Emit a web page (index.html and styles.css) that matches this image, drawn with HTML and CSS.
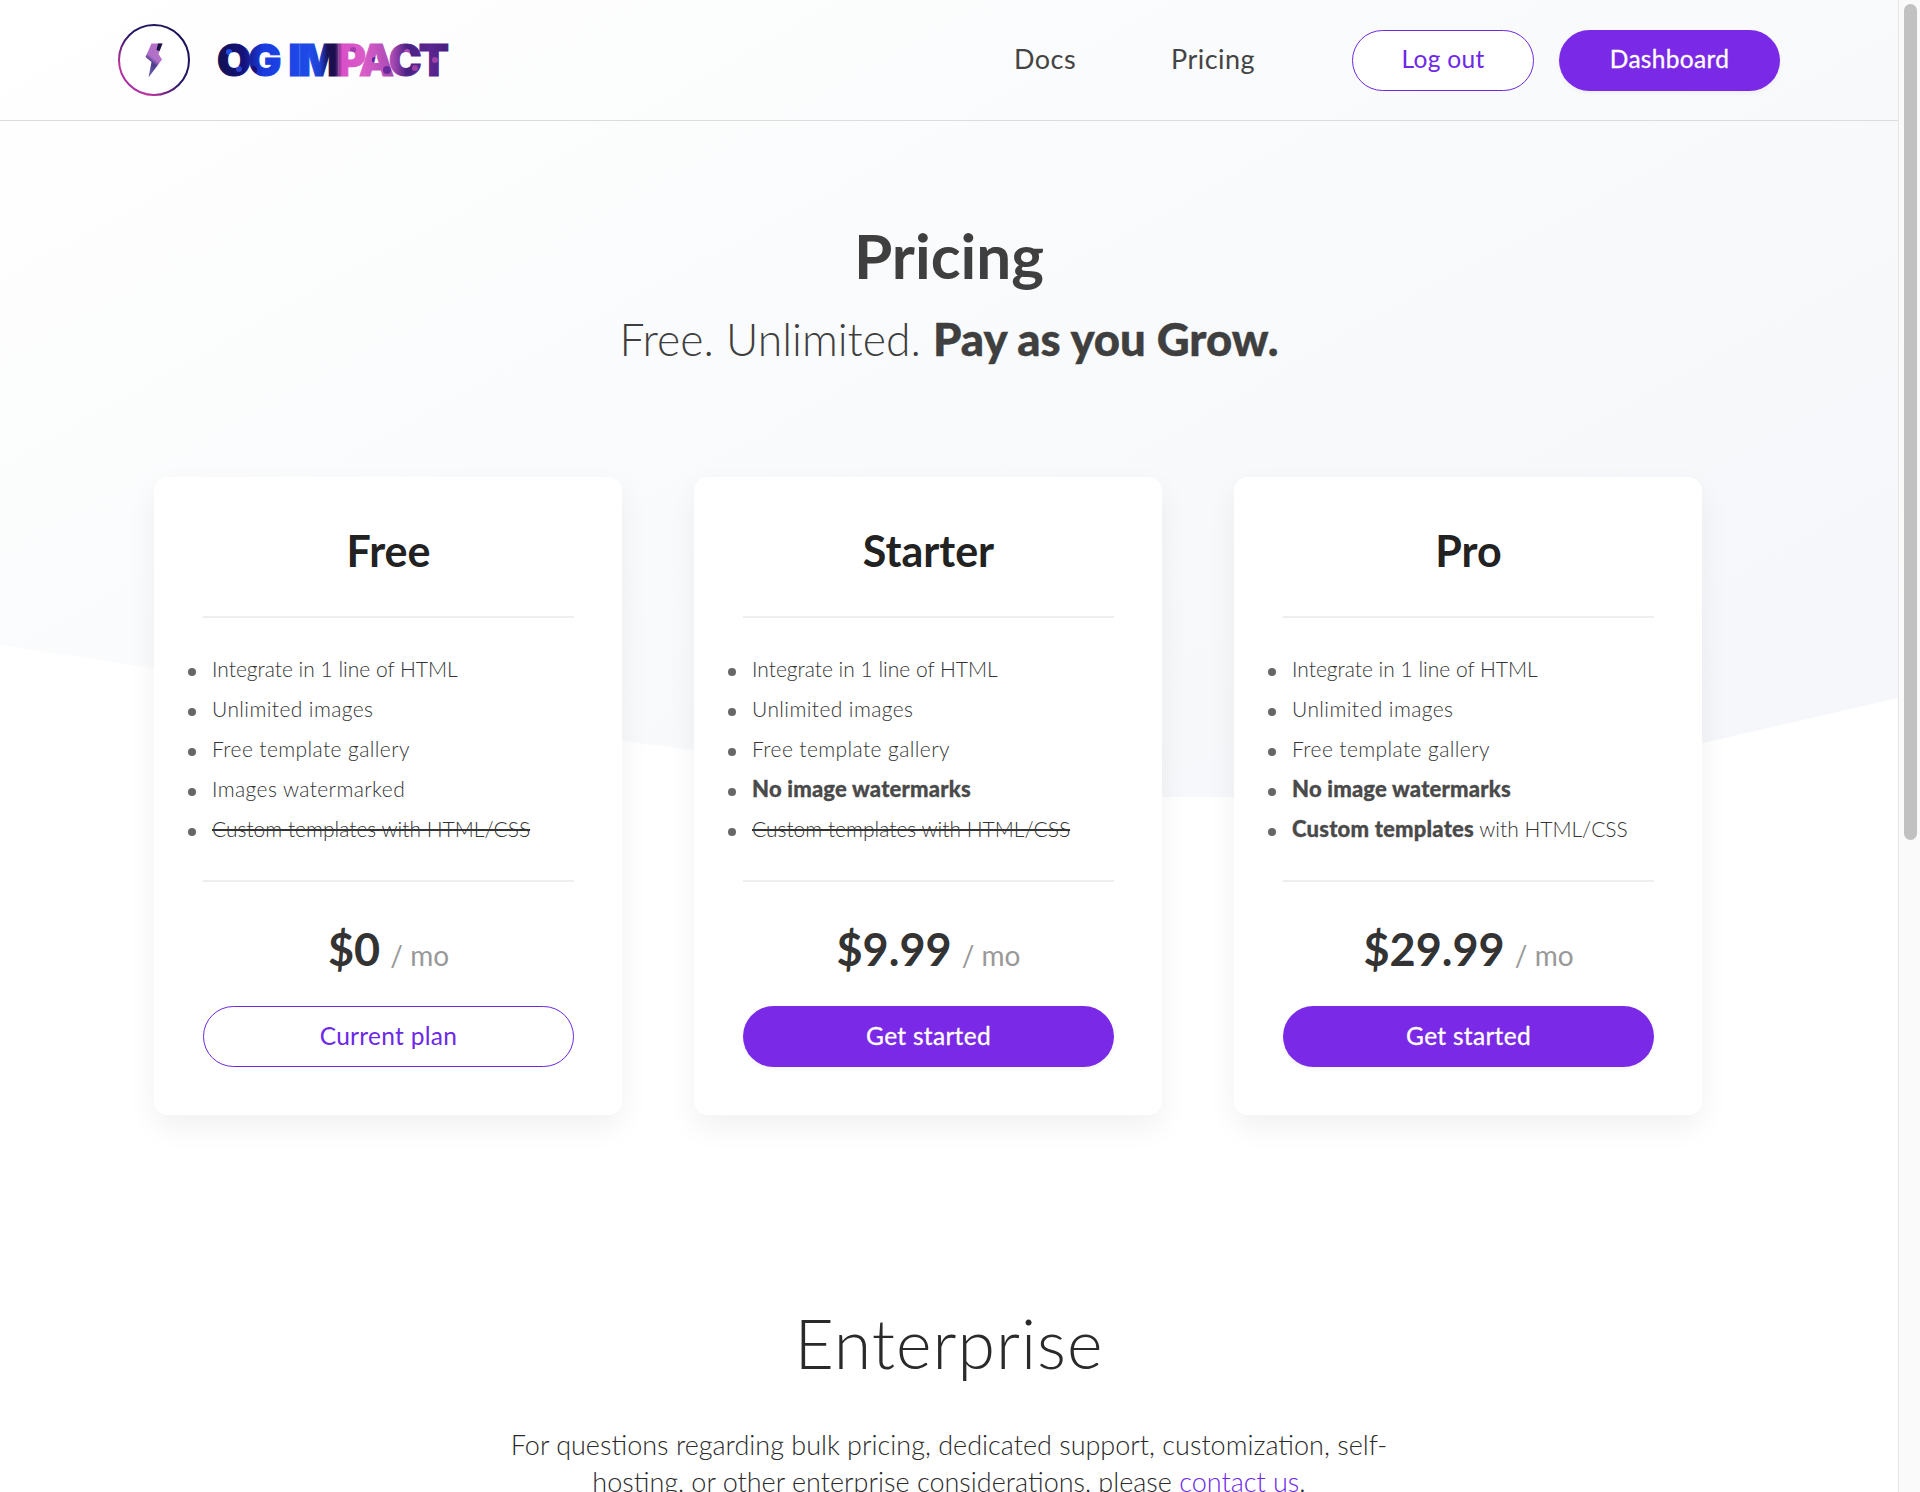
FILE: index.html
```html
<!DOCTYPE html>
<html lang="en">
<head>
	<meta charset="UTF-8">
	<title>Pricing</title>
<link rel="stylesheet" href="styles.css">
</head>
<body>
<div class="page">
	<div class="main">
		<svg class="wave" width="1898" height="800" viewBox="0 0 1898 800">
			<defs>
				<linearGradient id="waveFill" x1="0" y1="0" x2="1" y2="0.75">
					<stop offset="0" stop-color="#ffffff"/>
					<stop offset="0.45" stop-color="#fafbfc"/>
					<stop offset="1" stop-color="#f5f7fa"/>
				</linearGradient>
			</defs>
			<path d="M0 0H1898V698L1703 743Q1600 772 1480 797H985L693 750L622 741Q300 690 0 645Z" fill="url(#waveFill)"/>
		</svg>
		<header class="nav">
			<div class="brand">
				<svg class="brand-mark" width="72" height="72" viewBox="0 0 72 72">
					<defs>
						<linearGradient id="ring" x1="1" y1="0" x2="0" y2="1">
							<stop offset="0" stop-color="#14104f"/>
							<stop offset="0.5" stop-color="#2a1668"/>
							<stop offset="0.8" stop-color="#c2339f"/>
							<stop offset="1" stop-color="#5a22b0"/>
						</linearGradient>
						<linearGradient id="bolt" x1="0.7" y1="0" x2="0.3" y2="1">
							<stop offset="0" stop-color="#b96fc9"/>
							<stop offset="0.45" stop-color="#b070c8"/>
							<stop offset="0.6" stop-color="#4c3a8e"/>
							<stop offset="1" stop-color="#6a68b4"/>
						</linearGradient>
					</defs>
					<circle cx="36" cy="36" r="35" fill="#fff" stroke="url(#ring)" stroke-width="2"/>
					<path d="M33.5 19.5H44.5L40.5 30L44 35.5L30.5 53.5L33.5 38L27.5 33Z" fill="url(#bolt)"/>
					<path d="M40 19.5H44.5L41.5 27L38.5 26Z" fill="#1c1440"/>
				</svg>
				<svg class="brand-name" width="250" height="64" viewBox="0 0 250 64">
					<defs>
						<linearGradient id="nameFill" gradientUnits="userSpaceOnUse" x1="0" y1="0" x2="240" y2="0">
							<stop offset="0" stop-color="#10104f"/>
							<stop offset="0.12" stop-color="#14127a"/>
							<stop offset="0.2" stop-color="#1a3be0"/>
							<stop offset="0.4" stop-color="#1f4be8"/>
							<stop offset="0.44" stop-color="#1d3fcc"/>
							<stop offset="0.47" stop-color="#1c0f50"/>
							<stop offset="0.5" stop-color="#1c0f50"/>
							<stop offset="0.53" stop-color="#d94fc8"/>
							<stop offset="0.62" stop-color="#d95cc8"/>
							<stop offset="0.74" stop-color="#a84ab4"/>
							<stop offset="0.8" stop-color="#4a2185"/>
							<stop offset="0.9" stop-color="#5a2590"/>
							<stop offset="1" stop-color="#3f1c78"/>
						</linearGradient>
						<pattern id="nameTexture" patternUnits="userSpaceOnUse" width="250" height="64">
							<rect width="250" height="64" fill="url(#nameFill)"/>
							<circle cx="14" cy="24" r="3" fill="#1f4be8"/>
							<circle cx="24" cy="41" r="3" fill="#2a3fc8"/>
							<circle cx="38" cy="42" r="4" fill="#14127a"/>
							<circle cx="160" cy="32" r="3" fill="#5a1f90"/>
							<circle cx="172" cy="42" r="4" fill="#6a2a9c"/>
							<circle cx="192" cy="24" r="3" fill="#b04ab5"/>
							<circle cx="200" cy="40" r="3" fill="#a040a8"/>
							<circle cx="220" cy="32" r="3" fill="#a040a8"/>
							<circle cx="138" cy="22" r="3" fill="#a03cb0"/>
						</pattern>
					</defs>
					<text class="brand-text" x="2" y="48" textLength="232" fill="url(#nameTexture)" stroke="url(#nameTexture)" stroke-width="1">OG IMPACT</text>
				</svg>
			</div>
			<nav class="nav-links">
				<a class="nav-link" href="#">Docs</a>
				<a class="nav-link" href="#">Pricing</a>
			</nav>
			<div class="nav-btns">
				<a class="btn btn-line nav-out" href="#">Log out</a>
				<a class="btn btn-fill nav-dash" href="#">Dashboard</a>
			</div>
		</header>

		<section class="hero">
			<h1 class="hero-title">Pricing</h1>
			<p class="hero-sub">Free. Unlimited. <b>Pay as you Grow.</b></p>
		</section>

		<section class="plans">
			<div class="plan">
				<h2 class="plan-name">Free</h2>
				<ul class="plan-list">
					<li>Integrate in 1 line of HTML</li>
					<li>Unlimited images</li>
					<li>Free template gallery</li>
					<li>Images watermarked</li>
					<li><s>Custom templates with HTML/CSS</s></li>
				</ul>
				<p class="plan-price"><b>$0</b> <span>/ mo</span></p>
				<a class="btn btn-line" href="#">Current plan</a>
			</div>
			<div class="plan">
				<h2 class="plan-name">Starter</h2>
				<ul class="plan-list">
					<li>Integrate in 1 line of HTML</li>
					<li>Unlimited images</li>
					<li>Free template gallery</li>
					<li><b>No image watermarks</b></li>
					<li><s>Custom templates with HTML/CSS</s></li>
				</ul>
				<p class="plan-price"><b>$9.99</b> <span>/ mo</span></p>
				<a class="btn btn-fill" href="#">Get started</a>
			</div>
			<div class="plan">
				<h2 class="plan-name">Pro</h2>
				<ul class="plan-list">
					<li>Integrate in 1 line of HTML</li>
					<li>Unlimited images</li>
					<li>Free template gallery</li>
					<li><b>No image watermarks</b></li>
					<li><b>Custom templates</b> with HTML/CSS</li>
				</ul>
				<p class="plan-price"><b>$29.99</b> <span>/ mo</span></p>
				<a class="btn btn-fill" href="#">Get started</a>
			</div>
		</section>

		<section class="enterprise">
			<h2 class="enterprise-title">Enterprise</h2>
			<p class="enterprise-text">For questions regarding bulk pricing, dedicated support, customization, self-hosting, or other enterprise considerations, please <a href="#">contact us</a>.</p>
		</section>
	</div>
	<div class="scrollbar"><div class="scrollbar-thumb"></div></div>
</div>
</body>
</html>
```

FILE: styles.css
```css
*{margin:0;padding:0;box-sizing:border-box;list-style:none;}
html,body{height:1492px;overflow:hidden;}
body{background:#fff;color:#444;font-family:"Lato","Noto Sans",sans-serif;}
a{text-decoration:none;}

.page{display:flex;height:1492px;}
.main{position:relative;flex:1;min-width:0;}
.wave{position:absolute;left:0;top:0;}

.scrollbar{width:22px;padding:4px 3px 0 5px;background:#fafafa;border-left:1px solid #e6e6e6;}
.scrollbar-thumb{height:836px;background:#c1c1c1;border-radius:7px;}

.nav{position:relative;display:flex;align-items:center;height:121px;padding:0 118px;border-bottom:1px solid #dcdcdc;}
.brand{display:flex;align-items:center;gap:25px;}
.brand-mark,.brand-name{display:block;}
.brand-text{font-family:"Inter","Lato",sans-serif;font-weight:900;font-size:44px;word-spacing:4px;}
.nav-links{display:flex;gap:95px;margin-left:auto;padding-bottom:2px;}
.nav-link{color:#444;font-size:27px;line-height:34px;letter-spacing:.45px;}
.nav-btns{display:flex;gap:25px;margin-left:97px;}
.nav-out{width:182px;font-size:25px;}
.nav-dash{width:221px;font-size:25px;}

.btn{display:flex;align-items:center;justify-content:center;height:61px;padding-bottom:3px;border-radius:31px;font-size:24.5px;letter-spacing:.3px;}
.btn-line{background:#fff;border:1px solid #6d28e0;color:#6d28e8;}
.btn-fill{background:#7a2ae6;color:#fff;box-shadow:0 2px 4px rgba(0,0,0,.05);-webkit-text-stroke:.3px #fff;}

.hero{position:relative;padding-top:96px;text-align:center;color:#3f3f3f;}
.hero-title{font-size:62px;line-height:76px;font-weight:700;}
.hero-sub{margin-top:20px;font-size:44.5px;line-height:52px;font-weight:300;}
.hero-sub b{font-size:45.5px;font-weight:900;-webkit-text-stroke:.4px #3f3f3f;}

.plans{position:relative;display:grid;grid-template-columns:repeat(3,468px);gap:72px;margin:112px 0 0 154px;}
.plan{display:flex;flex-direction:column;height:638px;padding:0 48px 48px 49px;background:#fff;border-radius:14px;box-shadow:0 12px 30px rgba(0,0,0,.06);}
.plan-name{height:141px;padding-top:48px;border-bottom:2px solid #eee;text-align:center;color:#222;font-size:43px;line-height:52px;font-weight:700;}
.plan-list{height:264px;padding-top:31px;border-bottom:2px solid #eee;}
.plan-list li{height:40px;line-height:40px;font-size:21px;font-weight:300;color:#333;white-space:nowrap;}
.plan-list li:nth-child(n+2):nth-child(-n+4){letter-spacing:.4px;}
.plan-list li:before{content:"";display:inline-block;width:8px;height:8px;margin:0 16px 0 -15px;border-radius:50%;background:#666;vertical-align:middle;}
.plan-list b{font-size:22px;font-weight:900;letter-spacing:.2px;color:#4a4a4a;-webkit-text-stroke:.3px #4a4a4a;}
.plan-list li:nth-child(4) b{letter-spacing:.2px;}
.plan-price{flex:1;padding-top:37px;text-align:center;color:#999;font-size:28px;line-height:60px;}
.plan-price b{margin-right:3px;color:#333;font-size:45px;font-weight:700;}

.enterprise{position:relative;margin-top:186px;text-align:center;color:#2a2a2a;}
.enterprise-title{font-size:68px;line-height:84px;font-weight:300;letter-spacing:1px;}
.enterprise-text{width:900px;margin:41px auto 0;font-size:27px;line-height:37px;font-weight:300;}
.enterprise-text a{color:#6d28e8;}
```
